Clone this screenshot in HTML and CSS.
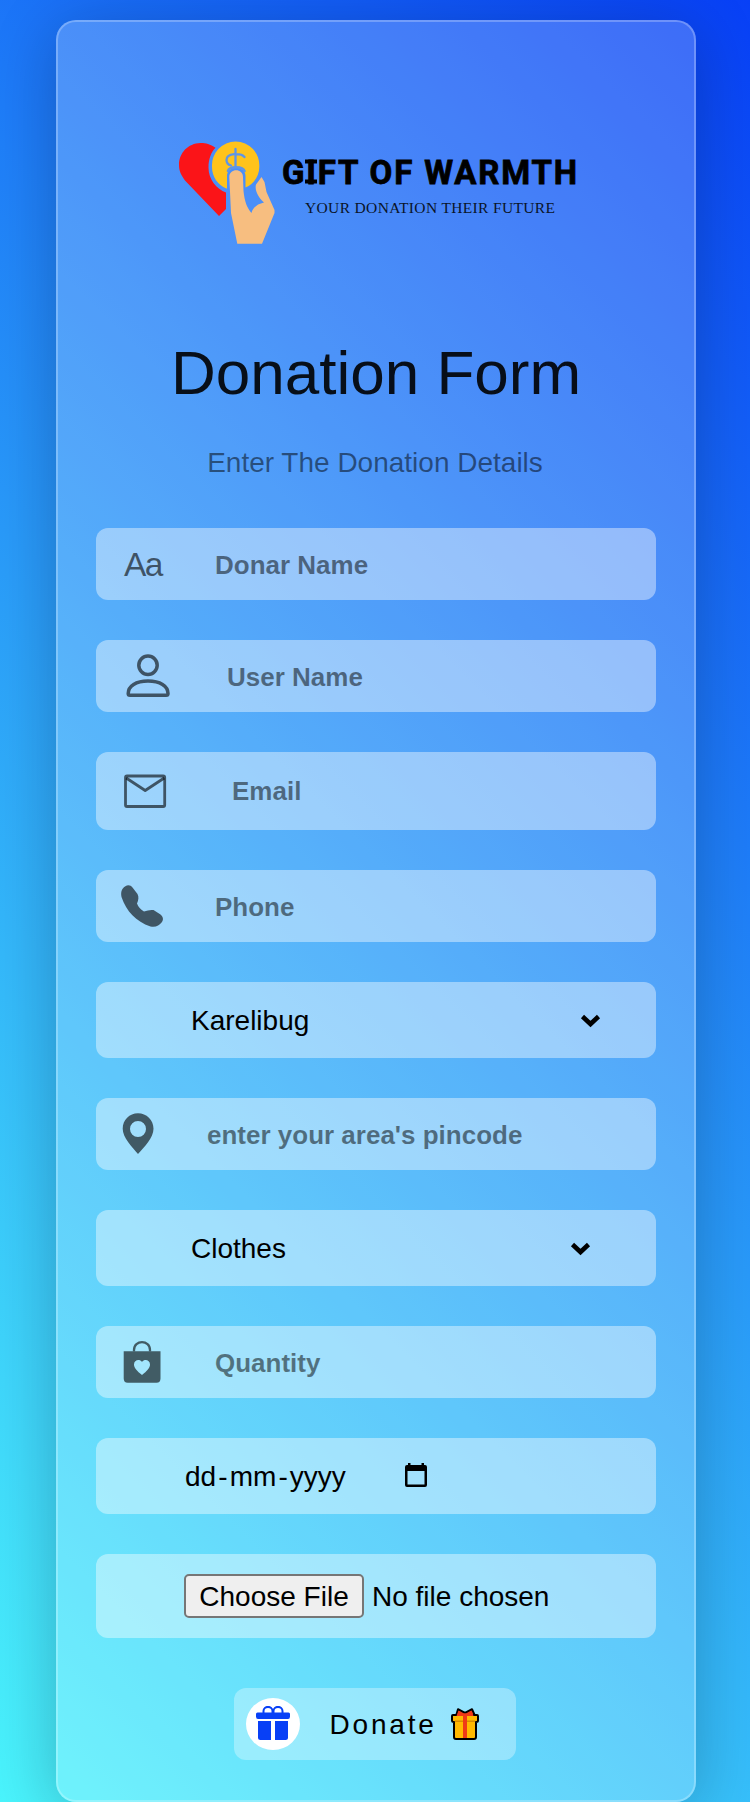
FILE: index.html
```html
<!DOCTYPE html>
<html lang="en">
<head>
<meta charset="utf-8">
<title>Donation Form</title>
<link rel="stylesheet" href="styles.css">
</head>
<body>
<main class="card">
  <svg class="logo" viewBox="170 130 420 125" role="img" aria-label="Gift of Warmth">
    <path fill="#fb1418" d="M215.500 147.800C210 143.800 204.500 142.800 200.500 143C188 143.300 179 153 179 165C179 171 181 175 185 180.500L219 216L226 209V192.500C216.500 189 208.500 179.500 208.500 167.500C208.500 159 211 152.500 215.500 147.800Z"/>
    <path fill="#ffc31b" d="M226.300 188.500C218 185 212 177 212 167A23.700 24 0 1 1 259.300 167C259.300 176 253.500 184.500 245.500 187.500V176C245.500 165 227 165 227 176V188.500Z"/>
    <g fill="none" stroke="#5d95e8" stroke-width="2.300" stroke-linecap="round">
      <path d="M244.500 157C241 152.800 226.500 152.800 226.500 160C226.500 163 228.500 164.800 231 165.500M235.500 149V166"/>
      <path d="M228 171C229 166 243 166 244.500 171" stroke-width="2.600"/>
    </g>
    <path fill="#f7be80" d="M229.300 177C229.300 168 243 168 243 177L243.500 191C244.500 201 247 208 251.500 213C252.500 208 257 204 264 202.500C258 197 254.500 190 256 184.500L261.500 177L264.500 182L266.500 192L274.500 210V213L262 243.700H237.300L231 213Z"/>
    <text class="logo-name" x="282" y="183.500" textLength="295">GIFT OF WARMTH</text>
    <path d="M305 159.500H317V163.500H305ZM305 179.500H317V183.500H305Z"/>
    <text class="logo-tag" x="305" y="213" textLength="250">YOUR DONATION THEIR FUTURE</text>
  </svg>
  <h1 class="title">Donation Form</h1>
  <p class="subtitle">Enter The Donation Details</p>

  <form class="form">
    <div class="field">
      <span class="lead letters">Aa</span>
      <span class="hint">Donar Name</span>
    </div>
    <div class="field">
      <svg class="lead wide" viewBox="123 652 50 48"><g class="line"><circle cx="148" cy="665.300" r="9.200"/><path d="M128.200 693.500C128.200 686 136 681 148 681S168 686 168 693.500Q168 695.300 166.200 695.300H130Q128.200 695.300 128.200 693.500Z"/></g></svg>
      <span class="hint">User Name</span>
    </div>
    <div class="field tall">
      <svg class="lead mail" viewBox="120 767 54 48"><g class="line thin"><rect x="125.500" y="776" width="39.200" height="30.500" rx="1.500"/><path d="M126.200 778L145.200 790.500L164.200 778"/></g></svg>
      <span class="hint">Email</span>
    </div>
    <div class="field">
      <svg class="lead" viewBox="120 882 47 48"><path d="M125 886.500C128 884.500 130.500 885 132.500 887.500L137.500 894C139 897 138.500 900 137 903.500Q138.500 908 144 911.500Q149 909.500 153.500 910L160.500 914.500C163.500 917.500 163.500 919.500 162 922C159 926 155.500 927.500 150.500 926.500C136 921.500 126.500 911.500 121.500 897C120.500 891.500 122 888.500 125 886.500Z"/></svg>
      <span class="hint">Phone</span>
    </div>
    <div class="field select">
      <span>Karelibug</span>
      <svg class="chevron" viewBox="0 0 19 12"><path d="M1.500 1.500L9.500 9L17.500 1.500"/></svg>
    </div>
    <div class="field">
      <svg class="lead pin" viewBox="120 1110 39 48"><path fill-rule="evenodd" d="M138 1113.300C129.500 1113.300 122.700 1120 122.700 1128.800C122.700 1137.500 132 1147 138 1154C144.500 1147 153.500 1137.500 153.500 1128.800C153.500 1120 146.500 1113.300 138 1113.300ZM138 1121A8 8 0 1 1 138 1137A8 8 0 1 1 138 1121Z"/></svg>
      <span class="hint">enter your area's pincode</span>
    </div>
    <div class="field select second">
      <span>Clothes</span>
      <svg class="chevron" viewBox="0 0 19 12"><path d="M1.500 1.500L9.500 9L17.500 1.500"/></svg>
    </div>
    <div class="field">
      <svg class="lead" viewBox="120 1338 47 48"><path fill-rule="evenodd" d="M123.700 1351.300H160.500V1378.500Q160.500 1382.700 156.500 1382.700H127.700Q123.700 1382.700 123.700 1378.500ZM142 1375C137 1371 134 1368 134 1364.500C134 1360 139.500 1358.500 142 1362C144.500 1358.500 150 1360 150 1364.500C150 1368 147 1371 142 1375Z"/><path class="handle" d="M134 1351.300V1350C134 1339.500 150 1339.500 150 1350V1351.300"/></svg>
      <span class="hint">Quantity</span>
    </div>
    <div class="field date">
      <span class="date-parts"><span>dd</span><span>-</span><span>mm</span><span>-</span><span>yyyy</span></span>
      <svg class="calendar" viewBox="0 0 22 24"><path fill-rule="evenodd" d="M3 0H5.500V2H16.500V0H19V2H20Q22 2 22 4V22Q22 24 20 24H2Q0 24 0 22V4Q0 2 2 2H3ZM2.500 8V21.500H19.500V8Z"/></svg>
    </div>
    <div class="field file">
      <button class="choose" type="button">Choose File</button>
      <span>No file chosen</span>
    </div>
  </form>

  <button class="donate" type="button">
    <span class="badge">
      <svg viewBox="0 0 34 34"><path d="M1.500 6.500H32.500Q34 6.500 34 8V10.500Q34 13 32 13H2Q0 13 0 10.500V8Q0 6.500 1.500 6.500ZM2 15H15V34H4.500Q2 34 2 31.500ZM19 15H32V31.500Q32 34 29.500 34H19Z"/><path class="bow" d="M7.500 7V5C7.500-.500 16.500 -.500 16.500 5V7M17.500 7V5C17.500-.500 26.500-.500 26.500 5V7"/></svg>
    </span>
    <span class="donate-text">Donate</span>
    <svg class="gift" viewBox="0 0 28 32"><path fill="#f03a17" stroke="#000" stroke-width="2" stroke-linejoin="round" d="M5 8L7 1.200L13 4.500H15L21 1.200L24 8Z"/><path fill="#ffb900" stroke="#000" stroke-width="2" stroke-linejoin="round" d="M2 7H26Q27 7 27 8V12.500Q27 14 25 14V29Q25 31 23 31H5Q3 31 3 29V14Q1 14 1 12.500V8Q1 7 2 7Z"/><path fill="#f03a17" d="M5.500 8L7.500 2.500L13 5.500H15L20.500 2.500L22.500 8H16V30H12V8Z"/><path fill="#d88b00" d="M4 12.500H12V14H4ZM16 12.500H24V14H16Z"/></svg>
  </button>
</main>
</body>
</html>
```

FILE: styles.css
```css
* { box-sizing: border-box; }

html, body { margin: 0; height: 1802px; overflow: hidden; }

body {
  padding: 20px 54px 0 56px;
  background: linear-gradient(45deg, #4af4fc, #0840f6);
  font-family: "Liberation Sans", Arial, sans-serif;
  font-size: 28px;
  line-height: 32px;
  color: #000;
}

.card {
  display: flex;
  flex-direction: column;
  align-items: center;
  height: 1782px;
  padding: 108px 38px 0;
  border: 2px solid rgba(255, 255, 255, .25);
  border-radius: 20px;
  background: rgba(255, 255, 255, .21);
  box-shadow: 0 10px 64px rgba(8, 7, 16, .24);
}

.logo { width: 420px; height: 125px; margin-left: 8px; flex: none; }
.logo-name { font: 700 33px Roboto, sans-serif; stroke: #000; stroke-width: .8; }
.logo-tag { font: 15.500px "Liberation Serif", serif; fill: #0a1428; }

.title {
  margin: 82px 0 0;
  font-size: 62px;
  font-weight: 400;
  line-height: 72px;
  color: rgba(0, 0, 0, .9);
}

.subtitle { margin: 38px 0 0 -2px; height: 48px; color: rgba(0, 0, 0, .5); }

.form { display: flex; flex-direction: column; gap: 40px; width: 560px; margin-top: 33px; }

.field {
  display: flex;
  align-items: center;
  height: 72px;
  padding-left: 24px;
  border-radius: 12px;
  background: rgba(255, 255, 255, .41);
}
.field.tall { height: 78px; }

.lead { width: 47px; height: 48px; margin-right: 48px; flex: none; fill: rgba(0, 0, 0, .6); }
.letters {
  padding-left: 4px;
  font-size: 33.500px;
  line-height: 50px;
  letter-spacing: -1.500px;
  color: rgba(0, 0, 0, .6);
}
.wide { width: 50px; margin-left: 3px; margin-right: 54px; }
.mail { width: 54px; margin-right: 58px; }
.pin { width: 39px; }
.line { fill: none; stroke: rgba(0, 0, 0, .6); stroke-width: 3.500; stroke-linejoin: round; }
.thin { stroke-width: 2.800; }
.handle { fill: none; stroke: rgba(0, 0, 0, .6); stroke-width: 2.300; }

.hint {
  padding-top: 2px;
  font-size: 26px;
  font-weight: 700;
  line-height: 30px;
  color: rgba(0, 0, 0, .5);
}
.tall .hint { padding-top: 0; }

.select { height: 76px; justify-content: space-between; padding: 0 56px 0 95px; }
.second { padding-right: 66px; }
.select span, .date-parts, .file span { padding-top: 2px; }
.chevron {
  width: 19px;
  height: 12px;
  margin-top: 1px;
  overflow: visible;
  fill: none;
  stroke: #000;
  stroke-width: 4.600;
}

.date { height: 76px; padding-left: 89px; gap: 59px; }
.date-parts { display: flex; gap: 2.100px; }
.calendar { width: 22px; height: 24px; margin-bottom: 2px; }

.file { height: 84px; padding-left: 88px; gap: 8px; }
.choose {
  width: 180px;
  height: 44px;
  padding: 2px 0 0;
  border: 2px solid #767676;
  border-radius: 5px;
  background: #efefef;
  color: #000;
  font: inherit;
}

.donate {
  display: flex;
  align-items: center;
  width: 282px;
  height: 72px;
  margin: 50px 0 0 -3px;
  padding: 0 0 0 12px;
  border: 0;
  border-radius: 12px;
  background: rgba(255, 255, 255, .32);
  color: #000;
  font: inherit;
}
.badge {
  display: grid;
  place-items: center;
  width: 54px;
  height: 52px;
  margin-right: 30px;
  border-radius: 50%;
  background: #fff;
}
.badge svg { width: 34px; height: 34px; margin-bottom: 2px; fill: #0840f6; }
.bow { fill: none; stroke: #0840f6; stroke-width: 2; }
.donate-text { padding-top: 1px; letter-spacing: 2.800px; }
.gift { width: 28px; height: 32px; margin-left: 14px; }
```
